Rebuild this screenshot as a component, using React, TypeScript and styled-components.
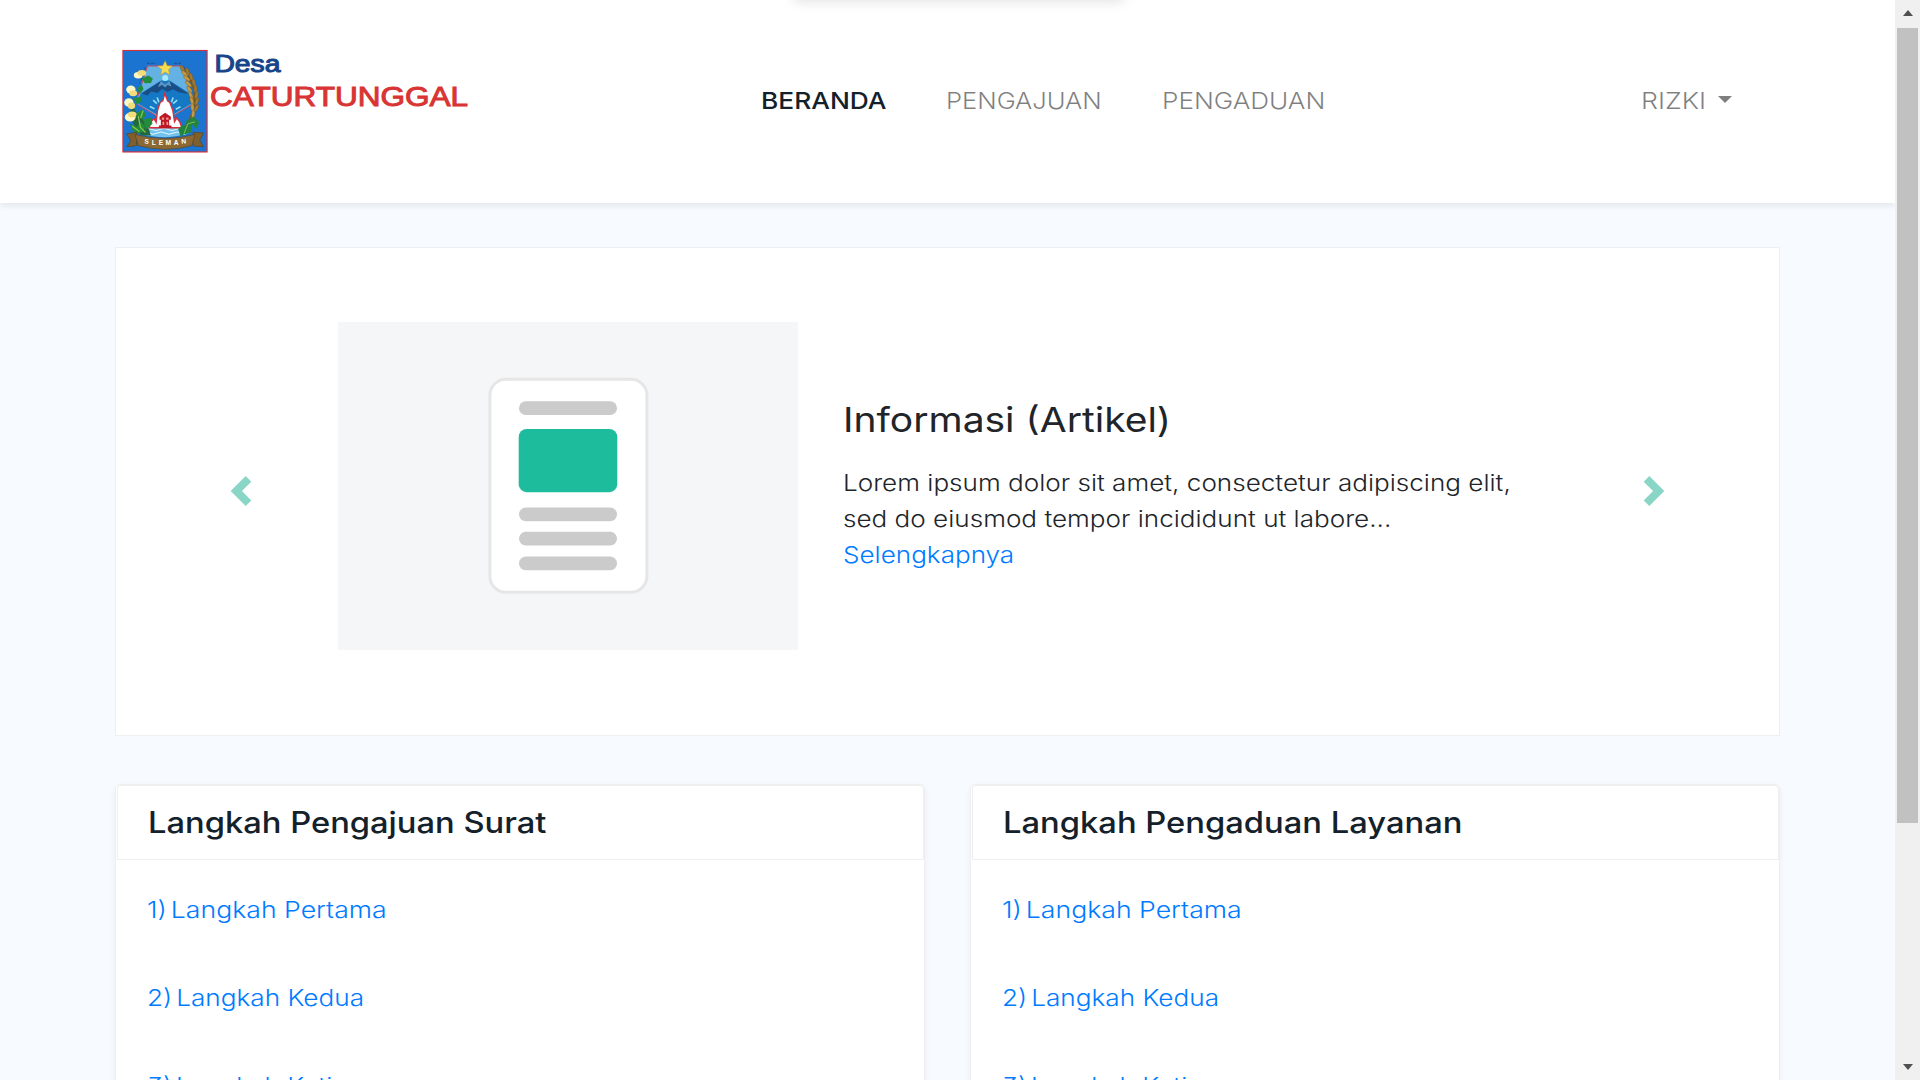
import React from "react";
import styled, { createGlobalStyle, css } from "styled-components";

const GlobalStyle = createGlobalStyle`
  *, *::before, *::after { box-sizing: border-box; }
  html, body { margin: 0; height: 1080px; overflow: hidden; }
  body {
    background: #f7faff;
    color: #212529;
    font-family: Inter, "Open Sans", sans-serif;
    font-size: 23px;
    font-weight: 300;
    line-height: 36px;
    font-feature-settings: "cv09";
  }
  h2, h3, p, ol { margin: 0; padding: 0; font-weight: inherit; font-size: inherit; }
`;

const Screen = styled.div`
  display: flex;
  height: 1080px;
  overflow: hidden;
`;

const Page = styled.div`
  flex: 1;
  min-width: 0;
  overflow: hidden;
`;

const Wide = styled.span<{ $ratio?: number }>`
  display: inline-block;
  white-space: nowrap;
  transform: scaleX(${(p) => p.$ratio ?? 1.134});
  transform-origin: left center;
`;

const Header = styled.header`
  display: flex;
  align-items: flex-start;
  height: 203px;
  padding-left: 122px;
  background: #fff;
  position: relative;
  box-shadow: 0 3px 6px rgba(0, 0, 0, 0.08);
`;

const TopShadow = styled.div`
  position: absolute;
  top: -20px;
  left: 793px;
  width: 332px;
  height: 19px;
  border-radius: 6px;
  box-shadow: 0 2px 13px rgba(0, 0, 0, 0.13);
`;

const Brand = styled.div`
  width: 638.5px;
  padding-top: 49px;
  svg { display: block; }
`;

const Nav = styled.nav`
  display: flex;
  width: 880.5px;
  padding-top: 82.5px;
`;

const NavLink = styled.a<{ $width: number; $active?: boolean }>`
  width: ${(p) => p.$width}px;
  color: rgba(0, 0, 0, 0.5);
  ${(p) =>
    p.$active &&
    css`
      color: #14212b;
      font-weight: 550;
    `}
`;

const UserMenu = styled.a`
  display: flex;
  align-items: flex-start;
  gap: 21.5px;
  padding-top: 82.5px;
  color: rgba(0, 0, 0, 0.5);
`;

const Caret = styled.span`
  margin-top: 13.5px;
  border: 7px solid transparent;
  border-top-color: #7f7f7f;
  border-bottom: 0;
`;

const Main = styled.main`
  display: flex;
  flex-direction: column;
  gap: 48px;
  padding: 44px 115px 0;
`;

const Hero = styled.section`
  display: flex;
  align-items: center;
  height: 489px;
  padding: 0 110px 1px;
  background: #fff;
  border: 1px solid #eeeff0;
`;

const Control = styled.button`
  display: flex;
  width: 30px;
  height: 30px;
  padding: 0;
  border: 0;
  background: none;
`;

const Slide = styled.article`
  display: flex;
  flex: 1;
  align-items: center;
  gap: 45px;
  padding: 0 0 11px 82px;
`;

const Picture = styled.figure`
  display: flex;
  flex: none;
  width: 460px;
  height: 328px;
  margin: 0;
  background: #f5f6f8;
`;

const SlideText = styled.div`
  display: flex;
  flex-direction: column;
  gap: 24px;
`;

const SlideTitle = styled.h2`
  && { font-size: 34px; font-weight: 400; }
  line-height: 42px;
`;

const Line = styled.span`
  display: block;
`;

const Link = styled.a`
  color: #007bff;
  font-weight: 300;
`;

const StepNumber = styled.span`
  margin-right: -3px;
`;

const Columns = styled.div`
  display: grid;
  grid-template-columns: 1fr 1fr;
  gap: 45px;
`;

const Card = styled.section`
  height: 420px;
  background: #fff;
  border: 1px solid #efefef;
  border-radius: 5px;
  box-shadow: 0 3px 6px rgba(0, 0, 0, 0.06);
`;

const CardHeader = styled.h3`
  && { font-size: 29.5px; font-weight: 550; }
  height: 75px;
  margin-left: 1px;
  padding: 18px 0 0 30px;
  color: #14212b;
  border: 1px solid #efefef;
  border-radius: 4px 4px 0 0;
`;

const Steps = styled.ol`
  display: flex;
  flex-direction: column;
  gap: 52px;
  && { padding: 31.5px 0 0 31px; }
  list-style: none;
`;

const Scrollbar = styled.aside`
  display: flex;
  flex-direction: column;
  align-items: center;
  flex: none;
  width: 25px;
  padding: 10px 0;
  background: #f0f0f0;
`;

const ScrollArrow = styled.span<{ $down?: boolean }>`
  border: 5.5px solid transparent;
  ${(p) =>
    p.$down
      ? css`
          margin-top: auto;
          border-top: 6px solid #505050;
          border-bottom: 0;
        `
      : css`
          border-bottom: 6px solid #505050;
          border-top: 0;
        `}
`;

const Thumb = styled.span`
  width: 21px;
  height: 795px;
  margin-top: 12px;
  background: #c1c1c1;
`;

const grains = [
  [203, 72, 60], [210, 86, 40], [218, 80, 75], [216, 100, 40], [229, 96, 75], [221, 117, 45],
  [237, 113, 78], [224, 134, 55], [242, 132, 88], [228, 151, 65], [245, 151, 100],
  [231, 168, 75], [246, 170, 110], [233, 188, 85], [245, 190, 115], [235, 208, 95],
];
const buds = [[70, 91, 13, 10], [81, 84, 13, 9], [48, 134, 14, 12], [55, 145, 12, 9], [42, 173, 14, 13], [50, 183, 11, 10], [46, 217, 16, 13], [52, 209, 13, 9]];

const Logo = () => (
  <svg width="350" height="108" viewBox="0 0 350 108">
    <svg x="0.2" y="0.7" width="85.6" height="103" viewBox="22 14 257 310" preserveAspectRatio="none">
      <rect x="24" y="16" width="253" height="306" fill="#1b75d0" stroke="#d7303c" strokeWidth="4" />
      <path d="M97 55h26M178 55h22M92 66l-17 50M207 66l20 46" stroke="#174f8c" strokeWidth="3" strokeDasharray="8 4" fill="none" />
      <path d="M98 63h104l36 112-88 53-88-53z" fill="#64b1e3" stroke="#c94960" strokeWidth="3" />
      <path d="M78 145l61-38h25l62 39 8 28-83 49-86-49z" fill="#1478c5" />
      <path d="M81 146l57-38 13 11 13-11 57 39-29-5-18-9-15 8-17-9-14 12-19-4-11 12z" fill="#1a4d83" />
      <path d="M138 108l13 11 13-11 6 17-12-5-7 8-9-8-13 7z" fill="#5a95c5" />
      <circle cx="151" cy="99" r="9" fill="#a5ecff" />
      <path d="M151 47l6 15 16 1-12 11 4 16-14-9-14 9 4-16-13-11 16-1z" fill="#f6dc50" stroke="#b8912f" strokeWidth="1.5" />
      <path d="M115 166l11 10M105 185l14 7M187 166l-12 10M197 186l-14 7M127 158l5 14M175 158l-5 14" stroke="#8fe0f5" strokeWidth="5" />
      <path d="M100 245q50-13 104 0l19 20q-68 24-147 1z" fill="#74c3ef" />
      <path d="M87 254q12-7 24 0t24 0 24 0 24 0 24 0M79 265q12-7 24 0t24 0 24 0 24 0 24 0 18 0" fill="none" stroke="#e5faff" strokeWidth="3" />
      <path d="M103 249l5-17 9-11 7 12 4-36 8-24 8-5 6-22 8 22 7 5 9 24 5 34 7-12 9 13 6 17z" fill="#fff" stroke="#d7303c" strokeWidth="4" />
      <path d="M134 216l17-12 17 12v9h-5v17h7v8h-38v-8h6v-17h-4z" fill="#bd1726" />
      <path d="M141 218h7v7h-7zM154 218h7v7h-7zM143 231h5v10h-5zM155 231h5v10h-5z" fill="#f49b88" />
      <path d="M57 139q-12 48 20 78 22 18 31 55l-30-1q-32-38-31-75z" fill="#24693b" />
      <path d="M80 101l21-9 13 9-6 13-18 1zM68 130l13-11 5 14-12 15zM57 160l25-6-2 17-17 7zM62 207l20-14 12 15-9 17zM45 237l22 10 8-17 15 12-4 18-28 9zM85 224l23-5 5 18-20 18z" fill="#238b3c" />
      <path d="M70 214l7 34 15 15M52 244l22 16M85 197l-8 23" stroke="#80c54d" strokeWidth="4" fill="none" />
      {buds.map(([x, y, rx, ry], i) => (
        <ellipse key={i} cx={x} cy={y} rx={rx} ry={ry} fill={i % 2 ? "#f3dc7c" : "#fff7c4"} />
      ))}
      <path d="M201 70q55 63 33 131-13 32-31 62" fill="none" stroke="#735923" strokeWidth="5" />
      {grains.map(([x, y, a], i) => (
        <ellipse key={i} cx={x} cy={y} rx="12" ry="5" transform={`rotate(${a} ${x} ${y})`} fill={i % 2 ? "#c49a43" : "#a17a30"} stroke="#5c4b2c" strokeWidth="1" />
      ))}
      <path d="M214 228l24-13 15 17-8 21-13-14-4 24-19 6-4-25 10 7zM190 252l18-15 6 27-17 11z" fill="#258241" />
      <path d="M208 266l11-29 22-6" stroke="#72c64b" strokeWidth="3" fill="none" />
      <path d="M35 267l30-4v40l-29 3 12-18zM266 265l-31-3v42l31 2-11-19z" fill="#805f2c" stroke="#56431f" strokeWidth="2" />
      <path d="M60 269q90 24 181 0l-10 34q-81 22-160 0z" fill="#8c6834" stroke="#5c471f" strokeWidth="2" />
      <g fill="#fff" fontFamily="Liberation Sans, sans-serif" fontSize="20" fontWeight="700">
        <text x="88" y="296" transform="rotate(5 88 296)">S</text>
        <text x="111" y="300">L</text>
        <text x="132" y="302">E</text>
        <text x="152" y="302">M</text>
        <text x="177" y="300">A</text>
        <text x="200" y="297" transform="rotate(-5 200 297)">N</text>
      </g>
    </svg>
    <text x="92.4" y="22.6" fill="#17458a" stroke="#17458a" strokeWidth="1.1" fontFamily="Liberation Sans, sans-serif" fontSize="24.5" textLength="66" lengthAdjust="spacingAndGlyphs">Desa</text>
    <text x="88" y="57.2" fill="#d93434" stroke="#d93434" strokeWidth="1" fontFamily="Liberation Sans, sans-serif" fontSize="28" textLength="258" lengthAdjust="spacingAndGlyphs">CATURTUNGGAL</text>
  </svg>
);

const ArticleDrawing = () => (
  <svg width="460" height="328" viewBox="0 0 460 328">
    <rect x="151.9" y="57.3" width="157" height="213" rx="16" fill="#fff" stroke="#e6e6e6" strokeWidth="3" />
    {[79.3, 185.5, 209.8, 234.5].map((y) => (
      <rect key={y} x="181" y={y} width="98" height="13.8" rx="6.9" fill="#cbcbcb" />
    ))}
    <rect x="180.7" y="107" width="98.6" height="63.2" rx="8" fill="#1cbc9c" />
  </svg>
);

const Chevron = ({ d }: { d: string }) => (
  <svg width="30" height="30" viewBox="0 0 8 8">
    <path d={d} fill="#8ad6c6" />
  </svg>
);

const steps = [
  { name: "Langkah Pertama", ratio: 1.158 },
  { name: "Langkah Kedua", ratio: 1.138 },
  { name: "Langkah Ketiga", ratio: 1.138 },
];

const StepCard = ({ title, ratio }: { title: string; ratio: number }) => (
  <Card>
    <CardHeader><Wide $ratio={ratio}>{title}</Wide></CardHeader>
    <Steps>
      {steps.map((step, i) => (
        <li key={step.name}>
          <Link>
            <Wide $ratio={step.ratio}><StepNumber>{i + 1})</StepNumber> {step.name}</Wide>
          </Link>
        </li>
      ))}
    </Steps>
  </Card>
);

export default function App() {
  return (
    <>
      <GlobalStyle />
      <Screen>
        <Page>
          <Header>
            <TopShadow />
            <Brand><Logo /></Brand>
            <Nav>
              <NavLink $width={185.7} $active><Wide $ratio={1.145}>BERANDA</Wide></NavLink>
              <NavLink $width={216}><Wide $ratio={1.111}>PENGAJUAN</Wide></NavLink>
              <NavLink $width={200}><Wide $ratio={1.137}>PENGADUAN</Wide></NavLink>
            </Nav>
            <UserMenu><Wide $ratio={1.165}>RIZKI</Wide><Caret /></UserMenu>
          </Header>
          <Main>
            <Hero>
              <Control aria-label="Previous"><Chevron d="M5.25 0l-4 4 4 4 1.5-1.5L4.25 4l2.5-2.5L5.25 0z" /></Control>
              <Slide>
                <Picture><ArticleDrawing /></Picture>
                <SlideText>
                  <SlideTitle><Wide $ratio={1.147}>Informasi (Artikel)</Wide></SlideTitle>
                  <p>
                    <Line><Wide>Lorem ipsum dolor sit amet, consectetur adipiscing elit,</Wide></Line>
                    <Line><Wide>sed do eiusmod tempor incididunt ut labore...</Wide></Line>
                    <Link><Wide>Selengkapnya</Wide></Link>
                  </p>
                </SlideText>
              </Slide>
              <Control aria-label="Next"><Chevron d="M2.75 0l-1.5 1.5L3.75 4l-2.5 2.5L2.75 8l4-4-4-4z" /></Control>
            </Hero>
            <Columns>
              <StepCard title="Langkah Pengajuan Surat" ratio={1.108} />
              <StepCard title="Langkah Pengaduan Layanan" ratio={1.109} />
            </Columns>
          </Main>
        </Page>
        <Scrollbar>
          <ScrollArrow />
          <Thumb />
          <ScrollArrow $down />
        </Scrollbar>
      </Screen>
    </>
  );
}
